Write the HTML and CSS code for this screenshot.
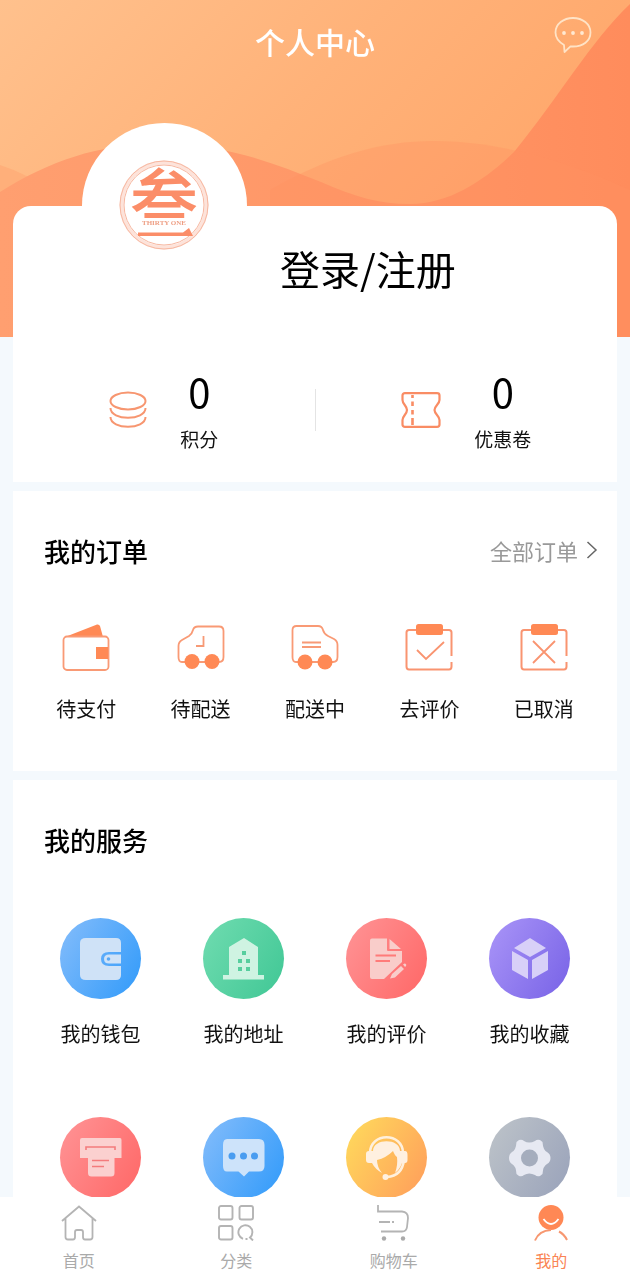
FILE: index.html
```html
<!DOCTYPE html>
<html lang="zh-CN">
<head>
<meta charset="utf-8">
<meta name="viewport" content="width=device-width, initial-scale=1">
<title>个人中心</title>
<link rel="stylesheet" href="styles.css">
</head>
<body>
<div class="app">
  <main class="content">
    <svg class="hero" viewBox="0 0 630 337" preserveAspectRatio="none" aria-hidden="true">
      <defs>
        <linearGradient id="sky" x1="0" y1="0" x2="1" y2="0.5"><stop offset="0" stop-color="#ffc18d"/><stop offset="0.5" stop-color="#ffb279"/><stop offset="1" stop-color="#ffa568"/></linearGradient>
        <linearGradient id="wave" x1="0" y1="0" x2="1" y2="0"><stop offset="0" stop-color="#ff9f70"/><stop offset="0.6" stop-color="#ff9666"/><stop offset="1" stop-color="#ff8c5c"/></linearGradient>
      </defs>
      <path fill="url(#sky)" d="M0 0H630V337H0z"/>
      <path fill="#ff9c68" fill-opacity=".35" d="M0 165Q25 173 50 190V337H0z"/>
      <path fill="url(#wave)" d="M0 192C50 160 100 145 150 144C225 143 270 162 321 182C355 197 380 204 410 204C450 204 485 180 514 152C560 96 590 42 630 4V337H0z"/>
      <path fill="#ff9160" fill-opacity=".35" d="M270 190C330 156 380 141 434 141C500 141 570 162 630 190V337H270z"/>
    </svg>

    <header class="topbar">
      <h1 class="topbar-title">个人中心</h1>
      <button class="message" type="button" aria-label="消息">
        <svg viewBox="0 0 38 38" width="38" height="38"><path d="M10 29C5 26 1.500 21.500 1.500 16.500C1.500 8 9.500 2 19 2S36.500 8 36.500 16.500S29 30.500 19 30.500Q17.500 30.500 16.500 30.300L10.500 36z" fill="none" stroke="#ffe3c6" stroke-width="1.800" stroke-linejoin="round"/><g fill="#ffe9d2"><circle cx="10" cy="17" r="1.900"/><circle cx="19" cy="17" r="1.900"/><circle cx="28" cy="17" r="1.900"/></g></svg>
      </button>
    </header>

    <section class="card profile">
      <div class="identity">
        <div class="avatar">
          <svg viewBox="0 0 165 165" width="165" height="165" role="img" aria-label="叁 THIRTY ONE">
            <defs><clipPath id="upper"><path d="M40 30H124V95H40z"/></clipPath></defs>
            <circle cx="82" cy="82" r="42.500" fill="none" stroke="#fde3da" stroke-width="4"/>
            <circle cx="82" cy="82" r="44" fill="none" stroke="#f7b7a0" stroke-width="1"/>
            <circle cx="82" cy="82" r="40" fill="none" stroke="#f7b7a0" stroke-width="1"/>
            <g clip-path="url(#upper)"><text class="logo-char" x="82" y="103" text-anchor="middle">叁</text></g>
            <text class="logo-name" x="82" y="102" text-anchor="middle">THIRTY ONE</text>
            <path d="M56 109.500H101L107 105L111 113H56z" fill="#fb8d68"/>
          </svg>
        </div>
        <a class="login" href="#login">登录/注册</a>
      </div>
      <div class="stats">
        <a class="stat" href="#points">
          <svg viewBox="0 0 38 38" width="38" height="38" fill="none" stroke="#f79670" stroke-width="2"><ellipse cx="19" cy="10" rx="17.500" ry="8.500"/><path d="M1.500 17C1.500 30 36.500 30 36.500 17M1.500 26C1.500 39 36.500 39 36.500 26"/></svg>
          <span class="stat-text"><strong class="stat-number">0</strong><span class="stat-label">积分</span></span>
        </a>
        <span class="divider"></span>
        <a class="stat" href="#coupons">
          <svg viewBox="0 0 40 38" width="40" height="38" fill="none" stroke="#f98c64" stroke-width="2.200"><path d="M4 2.200H36Q38.500 2.200 38.500 4.500V9C38.500 13 33.500 15 33.500 19S38.500 25 38.500 29V33.500Q38.500 35.800 36 35.800H4Q1.500 35.800 1.500 33.500V29C1.500 25 6 23 6 19S1.500 13 1.500 9V4.500Q1.500 2.200 4 2.200z"/><path d="M11.500 4V7M11.500 10.500V15M11.500 19V23.500M11.500 27V34" stroke-width="2.600"/></svg>
          <span class="stat-text"><strong class="stat-number">0</strong><span class="stat-label">优惠卷</span></span>
        </a>
      </div>
    </section>

    <section class="card orders">
      <div class="card-head">
        <h2 class="card-title">我的订单</h2>
        <a class="more" href="#orders">全部订单<svg viewBox="0 0 12 20" width="12" height="20"><path d="M1.500 2L10 10L1.500 18" fill="none" stroke="#666" stroke-width="1.500"/></svg></a>
      </div>
      <div class="order-grid">
        <a class="entry" href="#pay">
          <svg class="order-icon" viewBox="0 0 48 48"><path d="M3 13L35 .5Q37 0 38 2L41 13z" fill="#ff8955"/><rect x="1.500" y="12.500" width="45" height="33.500" rx="3.500" fill="none" stroke="#f99a75" stroke-width="1.800"/><path d="M34 23H46V35H34z" fill="#ff8955"/></svg>
          <span>待支付</span></a>
        <a class="entry" href="#to-ship">
          <svg class="order-icon" viewBox="0 0 48 48"><path d="M5 38Q1.500 38 1.500 33V22Q1.500 18 5 16L12 12Q15 10 16 6Q17 2.500 21 2.500H42Q46.500 2.500 46.500 7V33Q46.500 38 42 38z" fill="none" stroke="#f99a75" stroke-width="1.800"/><path d="M26.500 12V22H19" fill="none" stroke="#f79a76" stroke-width="1.800"/><g fill="#ff8955"><circle cx="15" cy="37.500" r="7.500"/><circle cx="35" cy="37.500" r="7.500"/></g></svg>
          <span>待配送</span></a>
        <a class="entry" href="#shipping">
          <svg class="order-icon" viewBox="0 0 48 48"><path d="M5 38Q1.500 38 1.500 33V6Q1.500 2 5.500 2H27Q31 2 32 6Q33 10 37 12L43 15Q46.500 17 46.500 21V33Q46.500 38 42 38z" fill="none" stroke="#f99a75" stroke-width="1.800"/><path d="M11 18.500H30M11 23H30" stroke="#f79a76" stroke-width="1.800"/><g fill="#ff8955"><circle cx="14" cy="38" r="7.500"/><circle cx="34" cy="38" r="7.500"/></g></svg>
          <span>配送中</span></a>
        <a class="entry" href="#review">
          <svg class="order-icon" viewBox="0 0 48 48"><path d="M12 6H4Q1.500 6 1.500 8.500V42.500Q1.500 45.500 4 45.500H44Q46.500 45.500 46.500 42.500V38M46.500 32V8.500Q46.500 6 44 6H36" fill="none" stroke="#f99470" stroke-width="2"/><rect x="11" y="0" width="27" height="11" rx="2.500" fill="#ff8955"/><path d="M12 26L21 35L39 18" fill="none" stroke="#f99470" stroke-width="1.800"/></svg>
          <span>去评价</span></a>
        <a class="entry" href="#cancelled">
          <svg class="order-icon" viewBox="0 0 48 48"><path d="M12 6H4Q1.500 6 1.500 8.500V42.500Q1.500 45.500 4 45.500H44Q46.500 45.500 46.500 42.500V38M46.500 32V8.500Q46.500 6 44 6H36" fill="none" stroke="#f99470" stroke-width="2"/><rect x="11" y="0" width="27" height="11" rx="2.500" fill="#ff8955"/><path d="M13 17L35 39M35 17L13 39" fill="none" stroke="#f99470" stroke-width="1.800"/></svg>
          <span>已取消</span></a>
      </div>
    </section>

    <section class="card services">
      <div class="card-head"><h2 class="card-title">我的服务</h2></div>
      <div class="service-grid">
        <a class="entry" href="#wallet">
          <span class="disc blue"><svg viewBox="0 0 81 81"><path d="M26 20H56Q61 20 61 25V34H49Q41 34 41 41T49 48H61V57Q61 62 56 62H26Q20 62 20 57V25Q20 20 26 20z" fill="#cfe2f7"/><path d="M61 36.500H49Q44 36.500 44 41T49 45.500H61z" fill="#cfe2f7"/><circle cx="48.500" cy="41" r="1.800" fill="#58a8f5"/></svg></span>
          <span>我的钱包</span></a>
        <a class="entry" href="#address">
          <span class="disc green"><svg viewBox="0 0 81 81"><path d="M26 29L41 20L55 29V57H61V61.500H20V57H26z" fill="#cff3e2"/><path d="M39 33H43V37H39zM35 41H39V45H35zM43 41H47V45H43zM35 49H39V53H35zM43 49H47V53H43z" fill="#57ce9e"/></svg></span>
          <span>我的地址</span></a>
        <a class="entry" href="#my-reviews">
          <span class="disc red"><svg viewBox="0 0 81 81"><path d="M26 20.500H41V32Q41 33 42 33H56V44L38 61H26Q24 61 24 59V22.500Q24 20.500 26 20.500zM43.500 21L55 31H43.500z" fill="#f9cdca"/><path d="M29.500 37.500H50M29.500 43H44" stroke="#ff7b79" stroke-width="2"/><path d="M44 60.500L46 56L55 48L58 51L49 59.500zM57 46.500L58.500 45.500Q61 46 60 48L59 49z" fill="#f9cdca"/></svg></span>
          <span>我的评价</span></a>
        <a class="entry" href="#favorites">
          <span class="disc purple"><svg viewBox="0 0 81 81"><path d="M41 20L57 30L41 39L25 30zM23 33L39 42V61L23 52zM59 33V52L43 61V42z" fill="#d8d0f8"/></svg></span>
          <span>我的收藏</span></a>
        <a class="entry" href="#bills" aria-label="账单">
          <span class="disc red"><svg viewBox="0 0 81 81"><path d="M22 21H60Q61.500 21 61.500 23V41H54.500V56Q54.500 59.500 51 59.500H31.500Q28 59.500 28 56V41H20V23Q20 21 22 21z" fill="#fbd0cf"/><path d="M26 33V30H55V33M32 43.500H49M32 49.500H44" fill="none" stroke="#f47b7c" stroke-width="1.600"/></svg></span></a>
        <a class="entry" href="#messages" aria-label="消息">
          <span class="disc blue"><svg viewBox="0 0 81 81"><path d="M24 22H56Q61.500 22 61.500 28V49Q61.500 54.500 56 54.500H46L41 59.500L35.500 54.500H24Q20 54.500 20 49V28Q20 22 24 22z" fill="#cde3fa"/><g fill="#4a9df0"><circle cx="29" cy="39" r="3.500"/><circle cx="40.500" cy="39" r="3.500"/><circle cx="51.500" cy="39" r="3.500"/></g></svg></span></a>
        <a class="entry" href="#support" aria-label="客服">
          <span class="disc yellow"><svg viewBox="0 0 81 81"><path d="M24 36C24 15 57 15 57 36M58 43Q56 59 41 60" fill="none" stroke="#fff0dc" stroke-width="2.500"/><path d="M23 34H27C27 21 54 21 54 34H59Q61.500 34 61.500 38V43Q61.500 46 59 46H56Q54 52 49 56Q52 48 51 40Q49 39 47 34Q40 41 31 43Q31 50 36 56Q29 52 26 46H23Q20 46 20 43V37Q20 34 23 34z" fill="#fff0e0"/><circle cx="39.500" cy="60" r="3" fill="#fff0e0"/></svg></span></a>
        <a class="entry" href="#settings" aria-label="设置">
          <span class="disc grey"><svg viewBox="0 0 81 81"><path d="M30 23Q33 22 35 24Q40 27 46 24Q48 22 51 23L53.500 25Q54 33 58 35Q61.500 37 61.500 41T58 47Q54 49 53.500 57L51 59Q48 60 46 58Q40 55 35 58Q33 60 30 59L27.500 57Q27 49 23 47Q20 45 20 41T23 35Q27 33 27.500 25z" fill="#e7e9f2"/><circle cx="40.500" cy="41" r="8.500" fill="#a5adbd"/></svg></span></a>
      </div>
    </section>
  </main>

  <nav class="tabbar">
    <a class="tab" href="#home"><svg viewBox="0 0 36 36" fill="none" stroke="#b4b4b4" stroke-width="1.800"><path d="M1 16L18 1.500L35 16M4.500 13.500V32Q4.500 34.500 7 34.500H12Q14 34.500 14 32V27Q14 25 16 25H20Q22 25 22 27V32Q22 34.500 24 34.500H29Q31.500 34.500 31.500 32V13.500"/></svg><span>首页</span></a>
    <a class="tab" href="#category"><svg viewBox="0 0 36 36" fill="none" stroke="#b4b4b4" stroke-width="1.900"><rect x="1" y="1" width="13.500" height="13.500" rx="2"/><rect x="21.500" y="1" width="13.500" height="13.500" rx="2"/><rect x="1" y="21" width="13.500" height="13.500" rx="2"/><path d="M25 33.800A7 7 0 1 1 32 32.500L35 35.500M27.500 34H29.500"/></svg><span>分类</span></a>
    <a class="tab" href="#cart"><svg viewBox="0 0 36 36" fill="none" stroke="#b4b4b4" stroke-width="1.800"><path d="M2 0V6.500H26Q32 7 32 13L31 22Q30.500 26.500 26 26.500H5M3 17H14M16 17H18"/><g fill="#aaa" stroke="none"><circle cx="8" cy="33.500" r="2.200"/><circle cx="27" cy="33.500" r="2.200"/></g></svg><span>购物车</span></a>
    <a class="tab active" href="#me" aria-current="page"><svg viewBox="0 0 36 36" fill="none"><circle cx="18" cy="12.500" r="12.500" fill="#ff8855"/><path d="M10.500 14Q18 24 25.500 14" stroke="#fff" stroke-width="1.800"/><path d="M2 35.500Q6 25.500 18 25M26 26.500Q31 29 34 35" stroke="#f79770" stroke-width="2"/></svg><span>我的</span></a>
  </nav>
</div>
</body>
</html>
```
FILE: styles.css
```css
* { box-sizing: border-box; }

body {
  margin: 0;
  background: #f4f9fd;
  color: #111;
  font-family: "Noto Sans CJK SC", sans-serif;
}

a { color: inherit; text-decoration: none; }
svg { display: block; }

.app {
  display: flex;
  flex-direction: column;
  height: 100vh;
}

.content {
  position: relative;
  flex: 1;
  min-height: 0;
  overflow-y: auto;
  scrollbar-width: none;
}

.hero {
  position: absolute;
  inset: 0 0 auto;
  z-index: -1;
  width: 100%;
  height: 337px;
}

.topbar {
  display: grid;
  grid-template-columns: 1fr auto 1fr;
  align-items: center;
  height: 82px;
  margin-bottom: 41px;
  padding: 0 38px;
}

.topbar-title {
  grid-column: 2;
  margin: 0;
  color: #fff;
  font-size: 30px;
  font-weight: 500;
  line-height: 40px;
}

.message {
  align-self: start;
  justify-self: end;
  margin-top: 16px;
  padding: 0;
  border: 0;
  background: none;
}

.card {
  margin: 0 13px 9px;
  background: #fff;
}

.profile {
  margin-top: 124px;
  border-radius: 18px 18px 0 0;
}

.identity {
  display: flex;
  align-items: flex-end;
  gap: 33px;
  height: 82px;
  padding-left: 69px;
}

.avatar {
  border-radius: 50%;
  background: #fff;
}

.logo-char {
  fill: #fb8d68;
  font-size: 68px;
  font-weight: 500;
}

.logo-name {
  fill: #ee9e83;
  font-family: "Liberation Serif", serif;
  font-size: 7px;
  font-weight: 700;
}

.login {
  color: #000;
  font-size: 40px;
  line-height: 40px;
}

.stats {
  display: grid;
  grid-template-columns: 1fr 1px 1fr;
  align-items: center;
  padding: 74px 0 24px;
}

.stat {
  display: flex;
  align-items: center;
  justify-content: center;
  gap: 33px;
}

.stat-text {
  display: flex;
  flex-direction: column;
  align-items: center;
}

.stat-number {
  color: #000;
  font-size: 40px;
  font-weight: 400;
  line-height: 58px;
}

.stat-label {
  font-size: 19px;
  line-height: 38px;
}

.divider {
  height: 42px;
  background: #e4e4e4;
}

.card-head {
  display: flex;
  align-items: center;
  justify-content: space-between;
  height: 91px;
  padding: 29px 19px 2px 31px;
}

.card-title {
  margin: 0;
  color: #000;
  font-size: 26px;
  font-weight: 500;
}

.more {
  display: flex;
  align-items: center;
  gap: 8px;
  color: #999;
  font-size: 22px;
}

.order-grid {
  display: grid;
  grid-template-columns: repeat(5, 1fr);
  padding: 42px 16px 48px;
}

.order-grid .entry { gap: 23px; }

.service-grid {
  display: grid;
  grid-template-columns: repeat(4, 1fr);
  row-gap: 69px;
  padding: 47px 16px 48px;
}

.entry {
  display: flex;
  flex-direction: column;
  align-items: center;
  gap: 21px;
  font-size: 20px;
  line-height: 28px;
}

.order-icon {
  width: 48px;
  height: 48px;
}

.disc {
  width: 81px;
  height: 81px;
  border-radius: 50%;
}

.blue { background: linear-gradient(120deg, #85bdfb, #309afa); }
.green { background: linear-gradient(120deg, #70dcb0, #40c795); }
.red { background: linear-gradient(120deg, #ff9496, #ff6766); }
.purple { background: linear-gradient(120deg, #aa95f8, #7762e6); }
.yellow { background: linear-gradient(120deg, #ffdc5c, #ff9c5b); }
.grey { background: linear-gradient(120deg, #bec4c9, #99a2ba); }

.tabbar {
  display: grid;
  grid-template-columns: repeat(4, 1fr);
  height: 83px;
  background: #fff;
}

.tab {
  display: flex;
  flex-direction: column;
  align-items: center;
  gap: 7px;
  padding-top: 8px;
  color: #aaa;
  font-size: 16px;
  line-height: 24px;
}

.tab svg {
  width: 36px;
  height: 36px;
}

.active { color: #fa8454; }
```
